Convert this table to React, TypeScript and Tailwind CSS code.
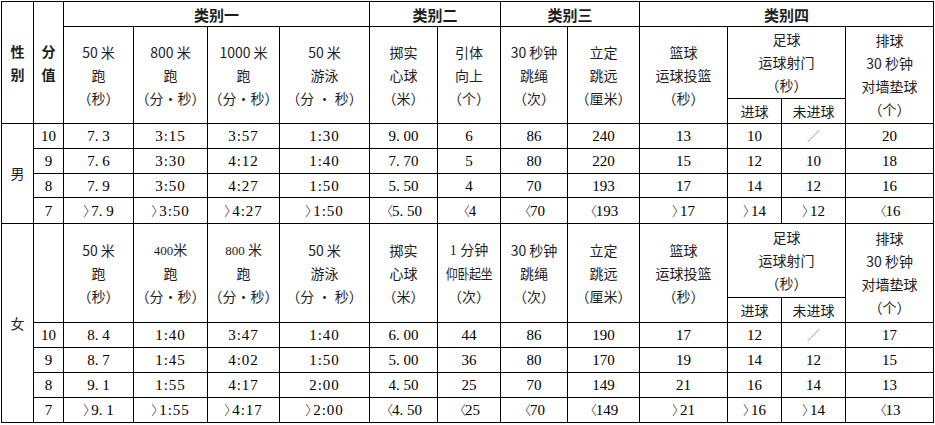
import React from "react";

const cols = [32, 30, 70, 74, 72, 90, 68, 63, 67, 72, 88, 54, 64, 88];

const cell = "border border-black p-0 text-center align-middle";
const sans = "font-['Noto_Sans_CJK_SC',sans-serif] text-[14px] leading-[23px] text-[#1e1e1e]";
const serif = "font-['Liberation_Serif','Noto_Sans_CJK_SC',serif] text-[15px] leading-[20px] text-black";

function Lines({ lines }: { lines: React.ReactNode[] }) {
  return (
    <div className={sans}>
      {lines.map((l, i) => (
        <div key={i} className="whitespace-nowrap">
          {l}
        </div>
      ))}
    </div>
  );
}

function Val({ v }: { v: string }) {
  if (v === "/") {
    return (
      <span className="font-['Noto_Sans_CJK_SC',sans-serif] text-[13px] font-light text-[#555]">／</span>
    );
  }
  let sign: string | null = null;
  let rest = v;
  if (v.startsWith(">")) {
    sign = "〉";
    rest = v.slice(1);
  } else if (v.startsWith("<")) {
    sign = "〈";
    rest = v.slice(1);
  }
  const track = rest.includes(":") ? "tracking-[1px]" : "";
  return (
    <span className="whitespace-nowrap">
      {sign === "〉" && (
        <span className="font-['Noto_Sans_CJK_SC',sans-serif] text-[13px] font-light text-[#222] mr-[-5px]">〉</span>
      )}
      {sign === "〈" && (
        <span className="font-['Noto_Sans_CJK_SC',sans-serif] text-[13px] font-light text-[#222] ml-[-5px] mr-[-1px]">〈</span>
      )}
      <span className={track}>{rest}</span>
    </span>
  );
}

const men = [
  ["10", "7. 3", "3:15", "3:57", "1:30", "9. 00", "6", "86", "240", "13", "10", "/", "20"],
  ["9", "7. 6", "3:30", "4:12", "1:40", "7. 70", "5", "80", "220", "15", "12", "10", "18"],
  ["8", "7. 9", "3:50", "4:27", "1:50", "5. 50", "4", "70", "193", "17", "14", "12", "16"],
  ["7", ">7. 9", ">3:50", ">4:27", ">1:50", "<5. 50", "<4", "<70", "<193", ">17", ">14", ">12", "<16"],
];

const women = [
  ["10", "8. 4", "1:40", "3:47", "1:40", "6. 00", "44", "86", "190", "17", "12", "/", "17"],
  ["9", "8. 7", "1:45", "4:02", "1:50", "5. 00", "36", "80", "170", "19", "14", "12", "15"],
  ["8", "9. 1", "1:55", "4:17", "2:00", "4. 50", "25", "70", "149", "21", "16", "14", "13"],
  ["7", ">9. 1", ">1:55", ">4:17", ">2:00", "<4. 50", "<25", "<70", "<149", ">21", ">16", ">14", "<13"],
];

const menH = ["h-[25px]", "h-[25px]", "h-[24px]", "h-[26px]"];

function DataRow({ r, male, idx }: { r: string[]; male?: boolean; idx: number }) {
  return (
    <tr className={male ? menH[idx] : "h-[25px]"}>
      {male && idx === 0 && (
        <td rowSpan={4} className={cell}>
          <div className={sans}>男</div>
        </td>
      )}
      {r.map((v, i) => (
        <td key={i} className={cell}>
          <div className={serif}>
            <Val v={v} />
          </div>
        </td>
      ))}
    </tr>
  );
}

export default function App() {
  const small = "font-['Liberation_Serif',serif] text-[13px]";
  return (
    <div className="bg-white w-[935px] h-[425px] pt-px pl-px">
      <table className="border-collapse table-fixed w-[933px]">
        <colgroup>
          {cols.map((w, i) => (
            <col key={i} style={{ width: w }} />
          ))}
        </colgroup>
        <tbody>
          <tr className="h-[25px]">
            <td rowSpan={3} className={cell}>
              <div className={sans + " font-bold"}>
                <div>性</div>
                <div>别</div>
              </div>
            </td>
            <td rowSpan={3} className={cell}>
              <div className={sans + " font-bold"}>
                <div>分</div>
                <div>值</div>
              </div>
            </td>
            <td colSpan={4} className={cell}>
              <div className={sans + " font-bold text-[15px]"}>类别一</div>
            </td>
            <td colSpan={2} className={cell}>
              <div className={sans + " font-bold text-[15px]"}>类别二</div>
            </td>
            <td colSpan={2} className={cell}>
              <div className={sans + " font-bold text-[15px]"}>类别三</div>
            </td>
            <td colSpan={4} className={cell}>
              <div className={sans + " font-bold text-[15px]"}>类别四</div>
            </td>
          </tr>
          <tr className="h-[72px]">
            <td rowSpan={2} className={cell}><Lines lines={["50 米", "跑", "（秒）"]} /></td>
            <td rowSpan={2} className={cell}><Lines lines={["800 米", "跑", "（分·秒）"]} /></td>
            <td rowSpan={2} className={cell}><Lines lines={["1000 米", "跑", "（分·秒）"]} /></td>
            <td rowSpan={2} className={cell}><Lines lines={["50 米", "游泳", "（分 · 秒）"]} /></td>
            <td rowSpan={2} className={cell}><Lines lines={["掷实", "心球", "（米）"]} /></td>
            <td rowSpan={2} className={cell}><Lines lines={["引体", "向上", "（个）"]} /></td>
            <td rowSpan={2} className={cell}><Lines lines={["30 秒钟", "跳绳", "（次）"]} /></td>
            <td rowSpan={2} className={cell}><Lines lines={["立定", "跳远", "（厘米）"]} /></td>
            <td rowSpan={2} className={cell}><Lines lines={["篮球", "运球投篮", "（秒）"]} /></td>
            <td colSpan={2} className={cell}><Lines lines={["足球", "运球射门", "（秒）"]} /></td>
            <td rowSpan={2} className={cell}><Lines lines={["排球", "30 秒钟", "对墙垫球", "（个）"]} /></td>
          </tr>
          <tr className="h-[25px]">
            <td className={cell}><Lines lines={["进球"]} /></td>
            <td className={cell}><Lines lines={["未进球"]} /></td>
          </tr>
          {men.map((r, i) => (
            <DataRow key={i} r={r} male idx={i} />
          ))}
          <tr className="h-[74px]">
            <td rowSpan={6} className={cell}>
              <div className={sans}>女</div>
            </td>
            <td rowSpan={2} className={cell}></td>
            <td rowSpan={2} className={cell}><Lines lines={["50 米", "跑", "（秒）"]} /></td>
            <td rowSpan={2} className={cell}>
              <Lines lines={[<span><span className={small}>400</span>米</span>, "跑", "（分·秒）"]} />
            </td>
            <td rowSpan={2} className={cell}>
              <Lines lines={[<span><span className={small}>800 </span>米</span>, "跑", "（分·秒）"]} />
            </td>
            <td rowSpan={2} className={cell}><Lines lines={["50 米", "游泳", "（分 · 秒）"]} /></td>
            <td rowSpan={2} className={cell}><Lines lines={["掷实", "心球", "（米）"]} /></td>
            <td rowSpan={2} className={cell}>
              <Lines
                lines={[
                  <span><span className={small + " text-[14px]"}>1 </span>分钟</span>,
                  <span className="inline-block scale-x-[0.86] tracking-[-0.5px]">仰卧起坐</span>,
                  "（次）",
                ]}
              />
            </td>
            <td rowSpan={2} className={cell}><Lines lines={["30 秒钟", "跳绳", "（次）"]} /></td>
            <td rowSpan={2} className={cell}><Lines lines={["立定", "跳远", "（厘米）"]} /></td>
            <td rowSpan={2} className={cell}><Lines lines={["篮球", "运球投篮", "（秒）"]} /></td>
            <td colSpan={2} className={cell}><Lines lines={["足球", "运球射门", "（秒）"]} /></td>
            <td rowSpan={2} className={cell}><Lines lines={["排球", "30 秒钟", "对墙垫球", "（个）"]} /></td>
          </tr>
          <tr className="h-[25px]">
            <td className={cell}><Lines lines={["进球"]} /></td>
            <td className={cell}><Lines lines={["未进球"]} /></td>
          </tr>
          {women.map((r, i) => (
            <DataRow key={i} r={r} idx={i} />
          ))}
        </tbody>
      </table>
    </div>
  );
}
